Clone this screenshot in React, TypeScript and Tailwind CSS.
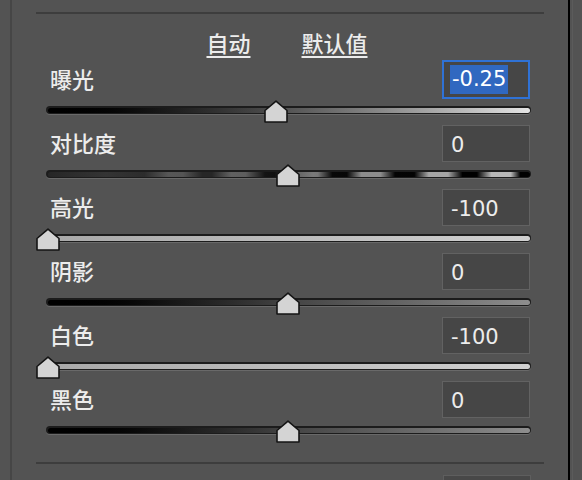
import React from 'react';

type TrackKind = 'exposure' | 'contrast' | 'light' | 'dark';

interface Row {
    label: string;
    value: string;
    pos: number;
    track: TrackKind;
    active?: boolean;
}

const rows: Row[] = [
    { label: '曝光', value: '-0.25', pos: 0.475, track: 'exposure', active: true },
    { label: '对比度', value: '0', pos: 0.5, track: 'contrast' },
    { label: '高光', value: '-100', pos: 0, track: 'light' },
    { label: '阴影', value: '0', pos: 0.5, track: 'dark' },
    { label: '白色', value: '-100', pos: 0, track: 'light' },
    { label: '黑色', value: '0', pos: 0.5, track: 'dark' },
];

const trackBg: Record<TrackKind, string> = {
    exposure: 'bg-linear-to-r from-[#000] via-[#555] to-[#e4e4e4]',
    contrast:
        'bg-[linear-gradient(90deg,#262626_0%,#343434_12%,#2c2c2c_20%,#575757_25%,#555_28%,#262626_32%,#262626_34%,#616161_38%,#5e5e5e_41%,#141414_45%,#111_47%,#666_52%,#7a7a7a_55%,#777_56%,#080808_59%,#060606_62%,#8d8d8d_65%,#8d8d8d_69%,#040404_72%,#030303_76%,#a6a6a6_79%,#a6a6a6_83%,#000_86%,#000_89%,#b8b8b8_92%,#b8b8b8_96%,#000_98%,#000_100%)]',
    light: 'bg-linear-to-r from-[#a8a8a8] to-[#d0d0d0]',
    dark: 'bg-linear-to-r from-[#000] via-[#444] to-[#8e8e8e]',
};

const Thumb: React.FC<{ pos: number }> = ({ pos }) => {
    // centre of the thumb measured from the track start
    const centre = 1.5 + 481 * pos;
    return (
        <svg
            width="24"
            height="23"
            viewBox="0 0 24 23"
            className="absolute top-0"
            style={{ left: `${centre - 12}px` }}
        >
            <polygon
                points="12,1.2 23,10.5 23,22 1,22 1,10.5"
                fill="#d4d4d4"
                stroke="#151515"
                strokeWidth="1.6"
                strokeLinejoin="round"
            />
        </svg>
    );
};

const SliderRow: React.FC<{ row: Row }> = ({ row }) => {
    return (
        <div className="flex flex-col shrink-0 mb-[3px]">
            <div className="flex items-center justify-between h-[37px]">
                <span className="pl-[4px] pb-[4px] text-[22px] leading-none font-medium text-[#ececec]">{row.label}</span>
                {row.active ? (
                    <div className="mr-[1px] w-[88px] h-[39px] -my-px border-2 border-[#2f72d6] bg-[#464646] flex items-center pl-[6px]">
                        <span className="h-[29px] leading-[29px] px-[2px] bg-[#3068c0] text-white text-[21px] font-['DejaVu_Sans',sans-serif]">
                            {row.value}
                        </span>
                    </div>
                ) : (
                    <div className="mr-[1px] w-[88px] h-[37px] border border-[#626262] bg-[#464646] flex items-center pl-[8px] pt-[3px]">
                        <span className="text-[21px] leading-none text-[#ececec] font-['DejaVu_Sans',sans-serif]">
                            {row.value}
                        </span>
                    </div>
                )}
            </div>
            <div className="relative h-[22px] mt-[2px] pt-[6px]">
                <div className="h-[8px] rounded-full bg-[#1c1c1c] p-[1.5px] shadow-[0_1px_0_rgba(255,255,255,0.13)]">
                    <div className={`h-full rounded-full ${trackBg[row.track]}`} />
                </div>
                <Thumb pos={row.pos} />
            </div>
        </div>
    );
};

export default function App() {
    return (
        <div className="w-[582px] h-[480px] bg-[#535353] flex overflow-hidden font-['Noto_Sans_CJK_SC','Noto_Sans',sans-serif]">
            <div className="w-[10px] shrink-0" />
            <div className="w-[2px] shrink-0 bg-[#464646]" />

            <div className="flex-1 flex flex-col">
                <div className="shrink-0 mt-[12px] mx-[24px] h-[2px] bg-[#3d3d3d]" />

                <div className="shrink-0 h-[47px] pt-[8px] flex items-center justify-center gap-[51px] pr-[6px] text-[22px] leading-none font-medium text-[#ececec]">
                    <span className="underline underline-offset-[4px] decoration-[1.5px]">自动</span>
                    <span className="underline underline-offset-[4px] decoration-[1.5px]">默认值</span>
                </div>

                <div className="shrink-0 ml-[34px] mr-[37px] flex flex-col">
                    {rows.map((row) => (
                        <SliderRow key={row.label} row={row} />
                    ))}
                </div>

                <div className="shrink-0 mt-[17px] mx-[24px] h-[2px] bg-[#3d3d3d]" />
                <div className="shrink-0 mt-[11px] ml-[431px] w-[88px] h-[20px] border border-[#5e5e5e] bg-[#484848]" />
            </div>

            <div className="w-[2px] shrink-0 bg-black" />
            <div className="w-[12px] shrink-0 flex">
                <div className="ml-[2px] w-px bg-[#5b5b5b]" />
            </div>
        </div>
    );
}
